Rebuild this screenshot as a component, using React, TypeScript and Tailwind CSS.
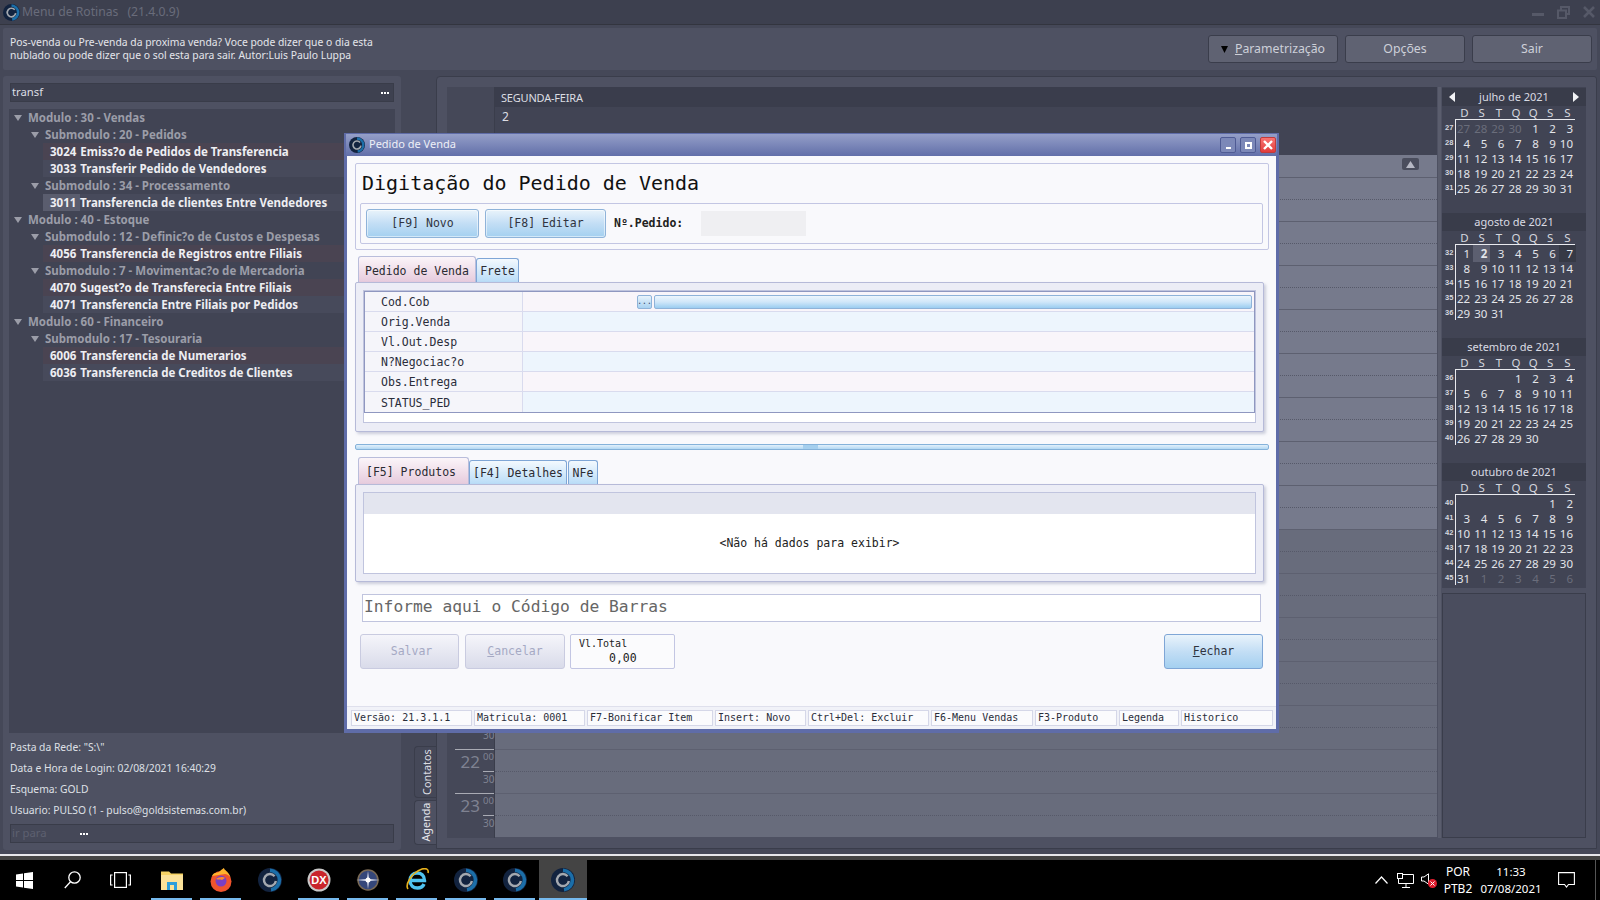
import React from "react";

const MONO = "font-['DejaVu_Sans_Mono',monospace]";

const tree: { kind: "mod" | "sub" | "leaf"; code?: string; text: string; tone?: "pink" | "blue"; picked?: boolean }[] = [
  { kind: "mod", text: "Modulo : 30 - Vendas" },
  { kind: "sub", text: "Submodulo : 20 - Pedidos" },
  { kind: "leaf", code: "3024", text: "Emiss?o de Pedidos de Transferencia", tone: "pink" },
  { kind: "leaf", code: "3033", text: "Transferir Pedido de Vendedores", tone: "blue" },
  { kind: "sub", text: "Submodulo : 34 - Processamento" },
  { kind: "leaf", code: "3011", text: "Transferencia de clientes Entre Vendedores", tone: "blue", picked: true },
  { kind: "mod", text: "Modulo : 40 - Estoque" },
  { kind: "sub", text: "Submodulo : 12 - Definic?o de Custos e Despesas" },
  { kind: "leaf", code: "4056", text: "Transferencia de Registros entre Filiais", tone: "pink" },
  { kind: "sub", text: "Submodulo : 7 - Movimentac?o de Mercadoria" },
  { kind: "leaf", code: "4070", text: "Sugest?o de Transferecia Entre Filiais", tone: "pink" },
  { kind: "leaf", code: "4071", text: "Transferencia Entre Filiais por Pedidos", tone: "blue" },
  { kind: "mod", text: "Modulo : 60 - Financeiro" },
  { kind: "sub", text: "Submodulo : 17 - Tesouraria" },
  { kind: "leaf", code: "6006", text: "Transferencia de Numerarios", tone: "pink" },
  { kind: "leaf", code: "6036", text: "Transferencia de Creditos de Clientes", tone: "blue" },
];

// "*" marks days of a neighbouring month, "_" an empty cell
const months = [
  {
    title: "julho de 2021",
    arrows: true,
    weeks: [
      "27 27* 28* 29* 30* 1 2 3",
      "28 4 5 6 7 8 9 10",
      "29 11 12 13 14 15 16 17",
      "30 18 19 20 21 22 23 24",
      "31 25 26 27 28 29 30 31",
    ],
  },
  {
    title: "agosto de 2021",
    weeks: [
      "32 1 2 3 4 5 6 7",
      "33 8 9 10 11 12 13 14",
      "34 15 16 17 18 19 20 21",
      "35 22 23 24 25 26 27 28",
      "36 29 30 31 _ _ _ _",
    ],
  },
  {
    title: "setembro de 2021",
    weeks: [
      "36 _ _ _ 1 2 3 4",
      "37 5 6 7 8 9 10 11",
      "38 12 13 14 15 16 17 18",
      "39 19 20 21 22 23 24 25",
      "40 26 27 28 29 30 _ _",
    ],
  },
  {
    title: "outubro de 2021",
    weeks: [
      "40 _ _ _ _ _ 1 2",
      "41 3 4 5 6 7 8 9",
      "42 10 11 12 13 14 15 16",
      "43 17 18 19 20 21 22 23",
      "44 24 25 26 27 28 29 30",
      "45 31 1* 2* 3* 4* 5* 6*",
    ],
  },
];

const hours = [9, 10, 11, 12, 13, 14, 15, 16, 17, 18, 19, 20, 21, 22, 23];

function RingLogo({ size = 16 }: { size?: number }) {
  return (
    <svg width={size} height={size} viewBox="0 0 24 24" className="shrink-0">
      <circle cx="12" cy="12" r="12" fill="#12233f" />
      <path d="M12 2.2a9.8 9.8 0 0 1 1 19.5" fill="none" stroke="#1b6ea8" strokeWidth="3.6" />
      <path d="M16.6 8.2a6 6 0 1 0 1.3 4.8" fill="none" stroke="#a4a9b0" strokeWidth="2.4" />
    </svg>
  );
}

function Dots() {
  return (
    <span className="flex gap-px">
      <span className="h-[2px] w-[2px] bg-white" />
      <span className="h-[2px] w-[2px] bg-white" />
      <span className="h-[2px] w-[2px] bg-white" />
    </span>
  );
}

function Arrow({ dir }: { dir: "left" | "right" }) {
  return (
    <svg width="6" height="10" viewBox="0 0 6 10">
      <path d={dir === "left" ? "M6 0V10L0 5Z" : "M0 0V10L6 5Z"} fill="#f2f3f6" />
    </svg>
  );
}

function Month({ title, arrows, weeks }: { title: string; arrows?: boolean; weeks: string[] }) {
  return (
    <div className="h-[125px]">
      <div className="flex h-[18px] items-center justify-between bg-[#393c4a] px-[7px] text-[11px] text-[#d9dbe3]">
        <span className="w-[6px]">{arrows && <Arrow dir="left" />}</span>
        <span>{title}</span>
        <span className="w-[6px]">{arrows && <Arrow dir="right" />}</span>
      </div>
      <div className="ml-[13px] grid h-[14px] w-[120px] grid-cols-7 border-b border-[#e8e9ee] text-center text-[11.5px] leading-[14px] text-[#d5d7df]">
        {["D", "S", "T", "Q", "Q", "S", "S"].map((d, i) => (
          <span key={i} className="pl-[2px]">{d}</span>
        ))}
      </div>
      <div className="flex flex-col">
        {weeks.map((w) => {
          const [num, ...days] = w.split(" ");
          return (
            <div key={num} className="flex h-[15px] items-center">
              <span className="w-[13px] pl-[3px] font-['Liberation_Sans',sans-serif] text-[7.5px] font-bold leading-none text-[#d5d7df]">{num}</span>
              <div className="grid h-full w-[121px] grid-cols-7 border-l border-[#e8e9ee]">
                {days.map((d, i) => {
                  const muted = d.endsWith("*");
                  const isToday = title.startsWith("agosto") && d === "2";
                  const isSeven = title.startsWith("agosto") && d === "7";
                  return (
                    <span
                      key={i}
                      className={`pr-[3px] text-right text-[11.5px] leading-[17px] ${
                        muted ? "text-[#6a6d7b]" : "text-[#e3e5ea]"
                      } ${isToday ? "bg-[#5c5f70] font-bold text-[#1f212b]" : ""} ${isSeven ? "bg-[#363945]" : ""}`}
                    >
                      {d === "_" ? "" : d.replace("*", "")}
                    </span>
                  );
                })}
              </div>
            </div>
          );
        })}
      </div>
    </div>
  );
}

function LeftPanel() {
  return (
    <div className="flex w-[398px] flex-col rounded-[3px] bg-[#4e5162] pt-[7px]">
      <div className="mx-[7px] flex h-[19px] items-center justify-between border border-[#393c49] bg-[#3e4150] pl-[1px] pr-[4px] text-[11.3px] text-[#dcdde3]">
        <span>transf</span>
        <Dots />
      </div>
      <div className="ml-[6px] mt-[7px] h-[624px] w-[386px] bg-[#414454]">
        {tree.map((r, i) => (
          <TreeRow key={i} row={r} />
        ))}
      </div>
      <div className="ml-[7px] mt-[4px] flex flex-col text-[10.3px] leading-[21px] text-[#dfe0e6]">
        <span>Pasta da Rede: "S:\"</span>
        <span>Data e Hora de Login: 02/08/2021 16:40:29</span>
        <span>Esquema: GOLD</span>
        <span>Usuario: PULSO (1 - pulso@goldsistemas.com.br)</span>
      </div>
      <div className="mx-[7px] mt-[3px] flex h-[19px] items-center border border-[#393c49] bg-[#454858] pl-[1px] text-[11.3px] text-[#5d6070]">
        <span className="w-[68px]">ir para</span>
        <Dots />
      </div>
    </div>
  );
}

function TreeRow({ row }: { row: (typeof tree)[number] }) {
  if (row.kind === "leaf") {
    return (
      <div
        className={`ml-[34px] flex h-[17px] items-center text-[11.5px] font-bold text-[#eeeef2] ${
          row.tone === "pink" ? "bg-[#4a4452]" : "bg-[#474a5b]"
        }`}
      >
        <span className={`flex h-full items-center pl-[7px] ${row.picked ? "w-[37px] bg-[#5a5d6e]" : ""}`}>{row.code}</span>
        <span className={row.picked ? "" : "ml-[4px]"}>{row.text}</span>
      </div>
    );
  }
  return (
    <div className={`flex h-[17px] items-center text-[11.5px] font-bold text-[#9b9da8] ${row.kind === "mod" ? "pl-[5px]" : "pl-[22px]"}`}>
      <svg width="8" height="6" viewBox="0 0 8 6" className="mr-[6px] shrink-0">
        <path d="M0 0H8L4 6Z" fill="#9b9da8" />
      </svg>
      {row.text}
    </div>
  );
}

function Schedule() {
  return (
    <div className="flex h-[773px] w-[1161px] rounded-tl-[4px] rounded-tr-[3px] border border-[#3a3d4b] bg-[#4e5162] pl-[10px] pt-[10px]">
      {/* time gutter */}
      <div className="h-[751px] w-[48px] border-r border-[#3a3d4b] bg-[#454858]">
        <div className="h-[90px]" />
        {hours.map((h) => (
          <div key={h} className="h-[44px] pl-[8px] text-[#7f8291]">
            <div className="flex h-[22px] border-t border-[#d4d5db]/70">
              <span className="w-[25px] pt-[2px] text-right text-[17px] leading-[20px]">{h >= 22 ? h : ""}</span>
              <span className="ml-[3px] text-[9.5px] leading-[14px]">{h >= 22 ? "00" : ""}</span>
            </div>
            <div className="ml-[28px] h-[22px] border-t border-[#d4d5db]/70 text-[10px] leading-[15px]">{h >= 21 ? "30" : ""}</div>
          </div>
        ))}
      </div>

      {/* day column */}
      <div className="relative h-[751px] w-[942px]">
        <div className="flex h-[20px] items-center bg-[#3a3d4c] pl-[6px] pt-[2px] text-[11px] tracking-[-0.2px] text-[#dcdde3]">SEGUNDA-FEIRA</div>
        <div className="h-[48px] bg-[#414454] pl-[7px] pt-[1px] text-[12px] text-[#dcdde3]">2</div>
        <div className="h-[22px] bg-[#767a8c]" />
        {hours.map((h) => (
          <div key={h} className={`h-[44px] border-t border-[#5d6070] ${h < 17 ? "bg-[#767a8c]" : "bg-[#686c7c]"}`}>
            <div className="h-[22px] border-b border-dotted border-[#565969]" />
          </div>
        ))}
        <div className="absolute right-[18px] top-[71px] flex h-[12px] w-[17px] items-center justify-center rounded-[2px] bg-[#4a4d5d]">
          <svg width="9" height="7" viewBox="0 0 9 7">
            <path d="M4.5 0L9 7H0Z" fill="#b6b8c4" />
          </svg>
        </div>
      </div>

      <div className="mx-[1px] h-[751px] w-[3px] bg-[#5a5d6d]" />

      {/* calendars */}
      <div className="flex w-[144px] flex-col">
        <div className="h-[501px] bg-[#414454] pt-px">
          {months.map((m) => (
            <Month key={m.title} title={m.title} arrows={m.arrows} weeks={m.weeks} />
          ))}
        </div>
        <div className="mt-[5px] h-[245px] border border-[#3a3d4b] bg-[#4a4d5e]" />
      </div>
    </div>
  );
}

function SideTabs() {
  return (
    <div className="flex w-[35px] flex-col items-end justify-end pb-[5px]">
      <div className="flex h-[52px] w-[22px] items-center justify-center rounded-l-[4px] border border-r-0 border-[#3a3d4b] bg-[#454858] pl-[2px] text-[10.8px] text-[#dcdde3]">
        <span className="-rotate-90 whitespace-nowrap">Contatos</span>
      </div>
      <div className="mt-[2px] flex h-[45px] w-[22px] items-center justify-center rounded-l-[4px] border border-r-0 border-[#3a3d4b] bg-[#4e5162] pl-[2px] text-[10.8px] text-[#e6e7ec]">
        <span className="-rotate-90 whitespace-nowrap">Agenda</span>
      </div>
    </div>
  );
}

function BlueButton({ label, w }: { label: string; w: string }) {
  return (
    <button className={`h-[29px] ${w} rounded-[3px] border border-[#8fb3d9] bg-linear-to-b from-[#e9f3fb] via-[#c3def5] to-[#a4d0f0] text-[11.5px] text-[#30343f] shadow-[inset_0_0_0_1px_rgba(255,255,255,0.5)]`}>
      {label}
    </button>
  );
}

function Tab({ label, active, w }: { label: string; active?: boolean; w: string }) {
  return active ? (
    <div className={`flex h-[26px] ${w} items-center rounded-t-[3px] border border-b-0 border-[#b9bddb] bg-linear-to-b from-[#fbf5f9] to-[#e6cbdd] pl-[6px] pt-[4px] text-[11.5px] text-[#2b2b33]`}>
      {label}
    </div>
  ) : (
    <div className={`flex h-[24px] ${w} items-center justify-center rounded-t-[3px] border border-b-0 border-[#7fa6d6] bg-linear-to-b from-[#f3f9fe] to-[#b9dcf7] pt-[2px] text-[11.5px] text-[#2b2b33]`}>
      {label}
    </div>
  );
}

const fields = ["Cod.Cob", "Orig.Venda", "Vl.Out.Desp", "N?Negociac?o", "Obs.Entrega", "STATUS_PED"];

const statusCells: [string, string][] = [
  ["Versão: 21.3.1.1", "w-[121px]"],
  ["Matricula: 0001", "w-[111px]"],
  ["F7-Bonificar Item", "w-[126px]"],
  ["Insert: Novo", "w-[91px]"],
  ["Ctrl+Del: Excluir", "w-[121px]"],
  ["F6-Menu Vendas", "w-[102px]"],
  ["F3-Produto", "w-[82px]"],
  ["Legenda", "w-[60px]"],
  ["Historico", "w-[92px]"],
];

function SalesDialog() {
  return (
    <div className={`absolute left-[344px] top-[133px] flex h-[600px] w-[935px] flex-col border-x-[3px] border-b-[4px] border-t border-[#5f6ca8] ${MONO}`}>
      {/* window caption */}
      <div className="-mx-[1px] flex h-[22px] shrink-0 items-center bg-linear-to-b from-[#959fc8] to-[#626fa9] pl-[3px] pr-[1px] font-['Noto_Sans',sans-serif] text-[11px] text-[#eef0f7]">
        <RingLogo size={16} />
        <span className="ml-[4px] pb-[2px]">Pedido de Venda</span>
        <div className="ml-auto flex gap-[4px]">
          <div className="flex h-[16px] w-[16px] items-end justify-center rounded-[2px] border border-[#4f5b94] bg-[#7c88b8] pb-[3px]">
            <div className="h-[2px] w-[5px] bg-white" />
          </div>
          <div className="flex h-[16px] w-[16px] items-center justify-center rounded-[2px] border border-[#4f5b94] bg-[#7c88b8]">
            <div className="h-[7px] w-[7px] border-2 border-white border-t-[2px]" />
          </div>
          <div className="flex h-[16px] w-[16px] items-center justify-center rounded-[2px] border border-[#c23b3b] bg-linear-to-b from-[#f87272] to-[#e23b3b]">
            <svg width="10" height="10" viewBox="0 0 10 10">
              <path d="M1 1L9 9M9 1L1 9" stroke="#fff" strokeWidth="2.4" />
            </svg>
          </div>
        </div>
      </div>

      <div className="flex flex-1 flex-col bg-[#f9f9fc]">
        {/* heading group */}
        <div className="ml-[8px] mt-[7px] h-[87px] w-[914px] rounded-[2px] border border-[#c3c6e3]">
          <h1 className="ml-[6px] mt-[7px] h-[25px] text-[20px] leading-[25px] text-[#111]">Digitação do Pedido de Venda</h1>
          <div className="ml-[4px] mt-[7px] flex h-[41px] w-[903px] items-center rounded-[2px] border border-[#c3c6e3] pl-[5px]">
            <BlueButton label="[F9] Novo" w="w-[113px]" />
            <div className="w-[6px]" />
            <BlueButton label="[F8] Editar" w="w-[121px]" />
            <span className="ml-[8px] w-[69px] pt-px text-[11.5px] font-bold text-[#222]">Nº.Pedido:</span>
            <div className="ml-[18px] h-[25px] w-[105px] bg-[#efeff2]" />
          </div>
        </div>

        {/* first tabs */}
        <div className="ml-[11px] mt-[6px] flex h-[26px] items-end">
          <Tab label="Pedido de Venda" active w="w-[118px]" />
          <Tab label="Frete" w="w-[43px]" />
        </div>
        <div className="ml-[8px] h-[150px] w-[909px] rounded-[2px] border border-[#b6bad8] bg-[#ecedf6] pl-[7px] pt-[7px] shadow-[2px_2px_3px_rgba(120,125,160,0.35)]">
          <div className="h-[133px] w-[893px] border border-[#c0c4de] bg-white">
            <div className="border border-[#8f97c0]">
              {fields.map((f, i) => (
                <div key={f} className={`flex h-[20px] border-b border-[#d9dbee] last:border-b-0 ${i % 2 === 0 ? "bg-[#f9f5fa]" : "bg-[#edf5fd]"}`}>
                  <div className="flex w-[158px] items-center border-r border-[#d9dbee] bg-[#f5f5fa] pl-[16px] pt-[3px] text-[11.5px] text-[#2a2d3a]">{f}</div>
                  {i === 0 && (
                    <div className="ml-[114px] flex items-center gap-[2px]">
                      <div className="flex h-[14px] w-[15px] items-center justify-center rounded-[2px] border border-[#8fb3d9] bg-linear-to-b from-[#e9f3fb] to-[#a8d2f1] text-[8px] leading-[6px] text-[#3a4a6a]">...</div>
                      <div className="h-[14px] w-[598px] rounded-[2px] border border-[#8fb3d9] bg-linear-to-b from-[#eef6fd] via-[#d0e7f9] to-[#9bcdf0]" />
                    </div>
                  )}
                </div>
              ))}
            </div>
          </div>
        </div>

        {/* splitter */}
        <div className="ml-[8px] mt-[12px] flex h-[6px] w-[914px] shrink-0 justify-center rounded-[2px] border border-[#85b2da] bg-linear-to-b from-[#e2f0fb] to-[#b3d8f3]">
          <div className="ml-[-4px] h-full w-[15px] bg-[#a5cfee]" />
        </div>

        {/* second tabs */}
        <div className="ml-[11px] mt-[7px] flex h-[27px] items-end">
          <div className="flex h-[27px] w-[111px] items-center rounded-t-[3px] border border-b-0 border-[#b9bddb] bg-linear-to-b from-[#fbf5f9] to-[#e6cbdd] pl-[7px] pt-[3px] text-[11.5px] text-[#2b2b33]">[F5] Produtos</div>
          <Tab label="[F4] Detalhes" w="w-[98px]" />
          <div className="w-px" />
          <Tab label="NFe" w="w-[30px]" />
        </div>
        <div className="ml-[8px] h-[98px] w-[909px] rounded-[2px] border border-[#b6bad8] bg-[#ecedf6] pl-[7px] pt-[7px] shadow-[2px_2px_3px_rgba(120,125,160,0.35)]">
          <div className="h-[82px] w-[893px] border border-[#c0c4de] bg-white">
            <div className="h-[21px] bg-[#e3e5ef]" />
            <div className="flex h-[59px] items-center justify-center text-[11.5px] text-[#222]">{"<Não há dados para exibir>"}</div>
          </div>
        </div>

        {/* barcode */}
        <div className="ml-[15px] mt-[12px] flex h-[28px] w-[899px] shrink-0 items-center border border-[#c0c4de] bg-white pb-[2px] pl-[1px] text-[16.3px] text-[#666]">
          Informe aqui o Código de Barras
        </div>

        {/* actions */}
        <div className="ml-[13px] mr-[13px] mt-[12px] flex h-[35px] shrink-0">
          <button className="h-[35px] w-[99px] rounded-[3px] border border-[#c9cbe0] bg-linear-to-b from-[#f5f5fa] via-[#e7e8f2] to-[#d9dbea] pl-[4px] text-[11.5px] text-[#a5a9c4]">Salvar</button>
          <button className="ml-[6px] h-[35px] w-[100px] rounded-[3px] border border-[#c9cbe0] bg-linear-to-b from-[#f5f5fa] via-[#e7e8f2] to-[#d9dbea] text-[11.5px] text-[#a5a9c4]">
            <span className="underline">C</span>ancelar
          </button>
          <div className="ml-[5px] h-[35px] w-[105px] rounded-[2px] border border-[#c3c6e3] bg-[#fbfbfd] pl-[8px] pt-[2px] text-[#222]">
            <div className="text-[10px] leading-[13px]">Vl.Total</div>
            <div className="ml-[30px] text-[11.5px] leading-[16px]">0,00</div>
          </div>
          <button className="ml-auto h-[35px] w-[99px] rounded-[3px] border border-[#7fa6d6] bg-linear-to-b from-[#e9f3fb] via-[#c3def5] to-[#a4d0f0] text-[11.5px] text-[#30343f]">
            <span className="underline">F</span>echar
          </button>
        </div>

        {/* status bar */}
        <div className="mt-auto flex h-[23px] items-center gap-[2px] border-t border-[#dfe0ec] bg-[#f1f2f8] pb-px pl-[4px]">
          {statusCells.map(([t, w]) => (
            <div key={t} className={`flex h-[16px] ${w} items-center border border-[#d5d7e8] bg-[#fbfbfd] pl-[2px] text-[10px] text-[#2a2d3a]`}>
              {t}
            </div>
          ))}
        </div>
      </div>
    </div>
  );
}

function WinLogo() {
  return (
    <svg width="17" height="17" viewBox="0 0 17 17">
      <path d="M0 2.4L7 1.4V8H0ZM8 1.2L17 0V8H8ZM0 9H7V15.6L0 14.6ZM8 9H17V17L8 15.8Z" fill="#fff" />
    </svg>
  );
}

function TaskIcon({ slot, active, lit = true, children }: { slot: string; active?: boolean; lit?: boolean; children: React.ReactNode }) {
  return (
    <div className={`relative flex h-[40px] items-center justify-center ${slot} ${active ? "bg-[#444]" : ""}`}>
      {children}
      {lit && <div className="absolute bottom-0 left-0 right-0 h-[2px] bg-[#76b9ed]" />}
    </div>
  );
}

function Taskbar() {
  return (
    <div className="flex h-[40px] shrink-0 items-center bg-black text-[12px] text-white">
      <div className="flex h-full w-[48px] items-center justify-center">
        <WinLogo />
      </div>
      <div className="flex h-full w-[48px] items-center justify-center">
        <svg width="17" height="18" viewBox="0 0 17 18" fill="none" stroke="#fff" strokeWidth="1.3">
          <circle cx="10.5" cy="6.5" r="5.7" />
          <path d="M6.5 10.8L0.8 17" />
        </svg>
      </div>
      <div className="flex h-full w-[48px] items-center justify-center">
        <svg width="21" height="16" viewBox="0 0 21 16" fill="none" stroke="#fff" strokeWidth="1.2">
          <rect x="4.6" y="0.6" width="11.8" height="14.8" />
          <path d="M2.6 3H0.6V13H2.6M18.4 3H20.4V13H18.4" />
        </svg>
      </div>
      <div className="w-[7px]" />
      <TaskIcon slot="w-[41px]">
        <svg width="22" height="20" viewBox="0 0 22 20">
          <path d="M0 1.5H8L10 3.5H22V20H0Z" fill="#f6d365" />
          <path d="M0 5H22V20H0Z" fill="#fbe29a" />
          <path d="M6 20V12H16V20H13V15H9V20Z" fill="#2d9fdc" />
        </svg>
      </TaskIcon>
      <div className="w-[8px]" />
      <TaskIcon slot="w-[41px]">
        <svg width="24" height="24" viewBox="0 0 24 24">
          <circle cx="12" cy="13.5" r="10.5" fill="#f0542d" />
          <path d="M3 8C5 4 8 5 10 4C12 2 15 0 15 0C15 2 19 3 21 8C22 11 20 6 16 6Z" fill="#ffb32c" />
          <circle cx="12" cy="13" r="5.5" fill="#7a3fc4" />
          <path d="M7 11C9 9 14 8 16 10L13 12C11 11 9 12 7 11Z" fill="#ff8a2c" />
        </svg>
      </TaskIcon>
      <div className="w-[8px]" />
      <TaskIcon slot="w-[41px]" lit={false}>
        <RingLogo size={24} />
      </TaskIcon>
      <div className="w-[8px]" />
      <TaskIcon slot="w-[41px]">
        <svg width="24" height="24" viewBox="0 0 24 24">
          <circle cx="12" cy="12" r="11.5" fill="#c9c9c9" />
          <circle cx="12" cy="12" r="9.5" fill="#c9242b" />
          <text x="12" y="16" textAnchor="middle" fontSize="11" fontWeight="700" fontFamily="Liberation Sans" fill="#fff">DX</text>
        </svg>
      </TaskIcon>
      <div className="w-[8px]" />
      <TaskIcon slot="w-[41px]">
        <svg width="24" height="24" viewBox="0 0 24 24">
          <circle cx="12" cy="12" r="10" fill="#35477a" stroke="#7a6a55" strokeWidth="1.5" />
          <path d="M12 3L13 11L24 12L13 13L12 21L11 13L0 12L11 11Z" fill="#e3e6f3" />
          <circle cx="12" cy="12" r="2.5" fill="#ffffff" />
        </svg>
      </TaskIcon>
      <div className="w-[8px]" />
      <TaskIcon slot="w-[41px]">
        <svg width="24" height="24" viewBox="0 0 24 24" fill="none">
          <path d="M5 12.5H19.5C19.5 7.5 16 5 12 5C8 5 5 8 5 12.5C5 17.5 8.5 20 12.5 20C15.5 20 18 18.5 19 16" stroke="#4fc3f0" strokeWidth="3.4" />
          <path d="M3 21C0 17 6 5 17 1C21 0 24 1 23 5" stroke="#e8b21c" strokeWidth="1.6" />
        </svg>
      </TaskIcon>
      <div className="w-[8px]" />
      <TaskIcon slot="w-[41px]">
        <RingLogo size={24} />
      </TaskIcon>
      <div className="w-[8px]" />
      <TaskIcon slot="w-[41px]">
        <RingLogo size={24} />
      </TaskIcon>
      <div className="w-[4px]" />
      <TaskIcon slot="w-[48px]" active>
        <RingLogo size={24} />
      </TaskIcon>

      {/* tray */}
      <div className="ml-auto flex h-full items-center">
        <svg width="13" height="8" viewBox="0 0 13 8" fill="none" stroke="#fff" strokeWidth="1.2">
          <path d="M0.5 7.5L6.5 1L12.5 7.5" />
        </svg>
        <svg width="17" height="15" viewBox="0 0 17 15" fill="none" stroke="#fff" className="ml-[9px]">
          <path d="M4.5 1.5H16.5V10.5H1.5V6M9 10.5V14M5 14.5H13" />
          <rect x="0.5" y="0.5" width="5" height="5" fill="#000" />
        </svg>
        <div className="relative ml-[7px] h-[16px] w-[16px]">
          <svg width="9" height="12" viewBox="0 0 9 12" fill="none" stroke="#fff" className="mt-[1px]">
            <path d="M0.5 4H3L7.5 0.8V11.2L3 8H0.5Z" />
          </svg>
          <div className="absolute bottom-0 right-0 flex h-[9px] w-[9px] items-center justify-center rounded-full bg-[#e11d2e]">
            <svg width="5" height="5" viewBox="0 0 5 5">
              <path d="M0.5 0.5L4.5 4.5M4.5 0.5L0.5 4.5" stroke="#fff" strokeWidth="1" />
            </svg>
          </div>
        </div>
        <div className="flex w-[42px] flex-col items-center text-[12px] leading-[17px]">
          <span>POR</span>
          <span>PTB2</span>
        </div>
        <div className="ml-[2px] flex w-[60px] flex-col items-center text-[11.5px] leading-[17px]">
          <span>11:33</span>
          <span>07/08/2021</span>
        </div>
        <svg width="17" height="17" viewBox="0 0 17 17" fill="none" stroke="#fff" strokeWidth="1.1" className="ml-[17px]">
          <path d="M0.6 0.6H16.4V12.5H10.5L8.5 15L6.5 12.5H0.6Z" />
        </svg>
        <div className="ml-[20px] h-full w-px bg-[#555]" />
        <div className="w-[4px]" />
      </div>
    </div>
  );
}

export default function App() {
  return (
    <div className="relative flex h-[900px] w-[1600px] flex-col overflow-hidden bg-[#454858] font-['Noto_Sans',sans-serif]">
      {/* app title */}
      <div className="flex h-[25px] shrink-0 items-center border-b border-[#33353f] bg-[#3d404f] pl-[3px] pr-[5px] text-[12.2px] text-[#696c7b]">
        <RingLogo size={17} />
        <span className="ml-[2px]">Menu de Rotinas</span>
        <span className="ml-[9px]">(21.4.0.9)</span>
        <div className="ml-auto flex items-center gap-[13px]">
          <div className="mt-[4px] h-[3px] w-[12px] bg-[#565968]" />
          <svg width="13" height="13" viewBox="0 0 13 13" fill="none" stroke="#565968" strokeWidth="2">
            <path d="M1 4.5H9V12H1ZM4 4V1H12V8H9" />
          </svg>
          <svg width="12" height="12" viewBox="0 0 12 12" stroke="#565968" strokeWidth="2.6">
            <path d="M1 1L11 11M11 1L1 11" />
          </svg>
        </div>
      </div>

      {/* tip and main buttons */}
      <div className="mx-[3px] mt-[3px] flex h-[42px] shrink-0 items-center justify-between rounded-[2px] bg-[#4e5162] pl-[7px] pr-[5px]">
        <p className="text-[10.35px] leading-[13px] text-[#e4e5ea]">
          Pos-venda ou Pre-venda da proxima venda? Voce pode dizer que o dia esta
          <br />
          nublado ou pode dizer que o sol esta para sair. Autor:Luis Paulo Luppa
        </p>
        <div className="flex gap-[7px]">
          <button className="flex h-[28px] w-[130px] items-center justify-center gap-[7px] rounded-[3px] border border-[#3a3d4b] bg-[#5f6272] text-[12.3px] text-[#cdd0d9]">
            <svg width="7" height="7" viewBox="0 0 7 7">
              <path d="M0 0H7L3.5 7Z" fill="#000" />
            </svg>
            <span><span className="underline">P</span>arametrização</span>
          </button>
          <button className="h-[28px] w-[120px] rounded-[3px] border border-[#3a3d4b] bg-[#5f6272] text-[12.3px] text-[#cdd0d9]">Opções</button>
          <button className="h-[28px] w-[120px] rounded-[3px] border border-[#3a3d4b] bg-[#5f6272] text-[12.3px] text-[#cdd0d9]">Sair</button>
        </div>
      </div>

      {/* work area */}
      <div className="ml-[3px] mt-[6px] flex h-[774px] shrink-0">
        <LeftPanel />
        <SideTabs />
        <Schedule />
      </div>

      <div className="mt-[4px] h-[2px] shrink-0 bg-[#e6e6ea]" />
      <div className="h-[4px] shrink-0 bg-[#444]" />
      <Taskbar />
      <SalesDialog />
    </div>
  );
}
